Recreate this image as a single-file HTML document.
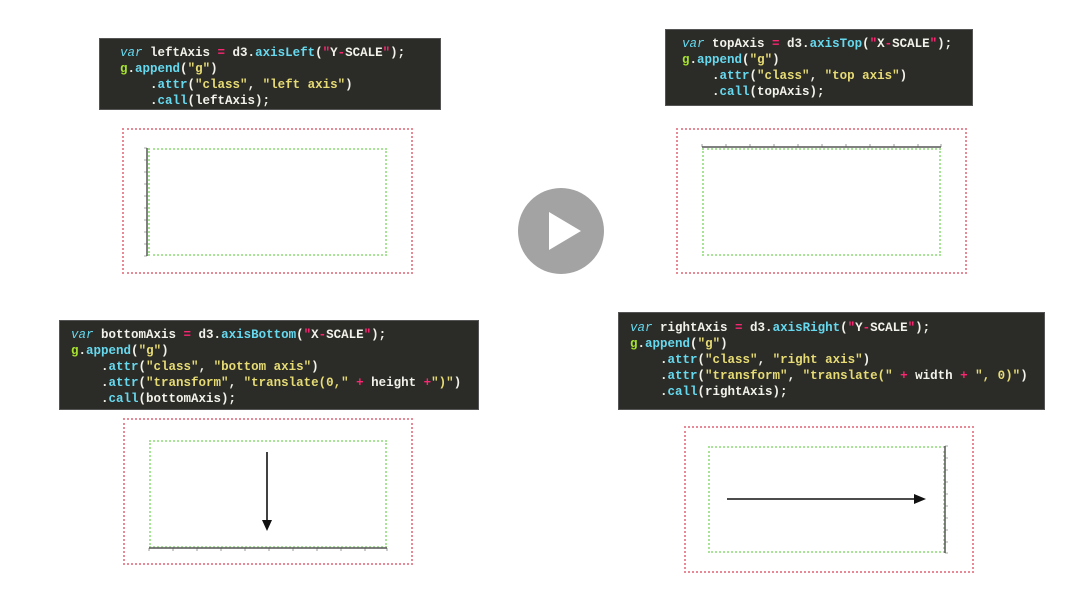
<!DOCTYPE html>
<html><head><style>
body{margin:0;width:1065px;height:610px;background:#fff;position:relative;overflow:hidden;font-family:"Liberation Mono",monospace}
.code{position:absolute;background:#2b2b27;color:#f2f2ea;font-size:12.5px;line-height:16px;padding:6px 0 0 0;box-sizing:border-box;white-space:pre;border:1px solid #555;font-weight:bold}
.k{color:#66d9ef;font-style:italic;font-weight:normal}.p{color:#f92672}.f{color:#66d9ef}.s{color:#e6db74}.g{color:#a6e22e}
.r{position:absolute;border:2px dotted #e88a95;box-sizing:border-box}
.gr{position:absolute;border:2px dotted #a8e496;box-sizing:border-box}
svg{position:absolute;left:0;top:0}
</style></head><body>
<div class="code" style="left:99px;top:38px;width:342px;height:72px;padding-left:20px"><span class="k">var</span> leftAxis <span class="p">=</span> d3.<span class="f">axisLeft</span>(<span class="p">"</span>Y<span class="p">-</span>SCALE<span class="p">"</span>);
<span class="g">g</span>.<span class="f">append</span>(<span class="s">"g"</span>)
    .<span class="f">attr</span>(<span class="s">"class"</span>, <span class="s">"left axis"</span>)
    .<span class="f">call</span>(leftAxis);</div>
<div class="code" style="left:665px;top:29px;width:308px;height:77px;padding-left:16px"><span class="k">var</span> topAxis <span class="p">=</span> d3.<span class="f">axisTop</span>(<span class="p">"</span>X<span class="p">-</span>SCALE<span class="p">"</span>);
<span class="g">g</span>.<span class="f">append</span>(<span class="s">"g"</span>)
    .<span class="f">attr</span>(<span class="s">"class"</span>, <span class="s">"top axis"</span>)
    .<span class="f">call</span>(topAxis);</div>
<div class="code" style="left:59px;top:320px;width:420px;height:90px;padding-left:11px"><span class="k">var</span> bottomAxis <span class="p">=</span> d3.<span class="f">axisBottom</span>(<span class="p">"</span>X<span class="p">-</span>SCALE<span class="p">"</span>);
<span class="g">g</span>.<span class="f">append</span>(<span class="s">"g"</span>)
    .<span class="f">attr</span>(<span class="s">"class"</span>, <span class="s">"bottom axis"</span>)
    .<span class="f">attr</span>(<span class="s">"transform"</span>, <span class="s">"translate(0,"</span> <span class="p">+</span> height <span class="p">+</span><span class="s">")"</span>)
    .<span class="f">call</span>(bottomAxis);</div>
<div class="code" style="left:618px;top:312px;width:427px;height:98px;padding-left:11px;padding-top:7px"><span class="k">var</span> rightAxis <span class="p">=</span> d3.<span class="f">axisRight</span>(<span class="p">"</span>Y<span class="p">-</span>SCALE<span class="p">"</span>);
<span class="g">g</span>.<span class="f">append</span>(<span class="s">"g"</span>)
    .<span class="f">attr</span>(<span class="s">"class"</span>, <span class="s">"right axis"</span>)
    .<span class="f">attr</span>(<span class="s">"transform"</span>, <span class="s">"translate("</span> <span class="p">+</span> width <span class="p">+</span> <span class="s">", 0)"</span>)
    .<span class="f">call</span>(rightAxis);</div>

<div class="r" style="left:122px;top:128px;width:291px;height:146px"></div>
<div class="gr" style="left:148px;top:148px;width:239px;height:108px"></div>
<div class="r" style="left:676px;top:128px;width:291px;height:146px"></div>
<div class="gr" style="left:702px;top:148px;width:239px;height:108px"></div>
<div class="r" style="left:123px;top:418px;width:290px;height:147px"></div>
<div class="gr" style="left:149px;top:440px;width:238px;height:108px"></div>
<div class="r" style="left:684px;top:426px;width:290px;height:147px"></div>
<div class="gr" style="left:708px;top:446px;width:237px;height:107px"></div>

<svg width="1065" height="610">
<g stroke="#555" stroke-width="1.5" fill="none">
<path d="M147 148V256"/><path d="M144 148h3M144 160h3M144 172h3M144 184h3M144 196h3M144 208h3M144 220h3M144 232h3M144 244h3M144 256h3" stroke-width="0.6"/>
<path d="M702 147H941"/><path d="M702 144v3M726 144v3M750 144v3M774 144v3M798 144v3M822 144v3M846 144v3M870 144v3M894 144v3M918 144v3M941 144v3" stroke-width="0.6"/>
<path d="M149 548H387"/><path d="M149 548v3M173 548v3M197 548v3M221 548v3M245 548v3M269 548v3M293 548v3M317 548v3M341 548v3M365 548v3M387 548v3" stroke-width="0.6"/>
<path d="M945 446V553"/><path d="M945 446h3M945 458h3M945 470h3M945 482h3M945 494h3M945 506h3M945 518h3M945 530h3M945 542h3M945 553h3" stroke-width="0.6"/>
</g>
<path d="M267 452V524" stroke="#111" stroke-width="1.6"/><path d="M262 520L267 531L272 520Z" fill="#111"/>
<path d="M727 499H918" stroke="#111" stroke-width="1.6"/><path d="M914 494L926 499L914 504Z" fill="#111"/>
<circle cx="561" cy="231" r="43" fill="#9e9e9e" opacity="0.95"/>
<path d="M549 212L549 250L581 231Z" fill="#fff"/>
</svg>
</body></html>
